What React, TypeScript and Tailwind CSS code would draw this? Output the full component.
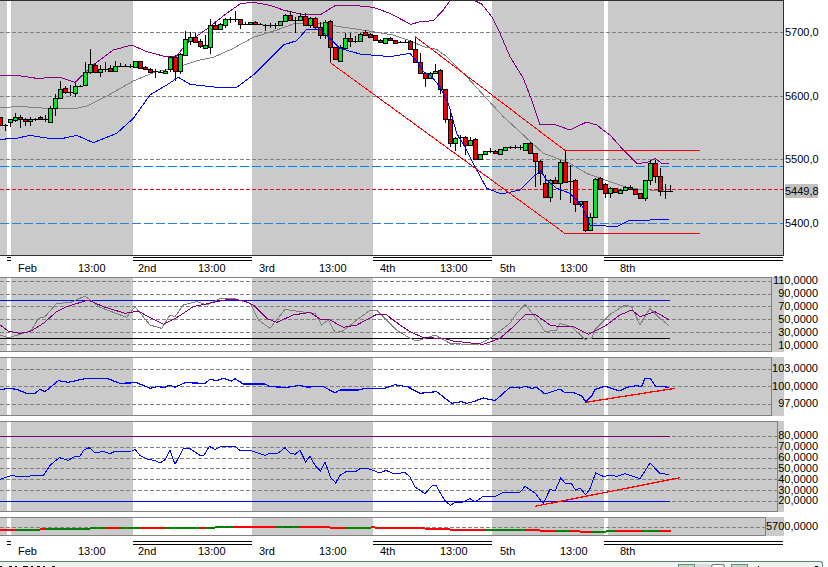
import type { ReactNode } from "react";

type Candle = [number, number, number, number, number];

// [top, bottom, high, low, kind] in 3x zoom units, one per bar, 5px apart. kind: 0 down, 1 up, 2 doji
const BARS: Candle[] = [
  [352, 375, 352, 378, 0], [375, 375, 372, 392, 2], [358, 365, 358, 380, 1], [352, 360, 340, 365, 1], [352, 358, 345, 384, 0],
  [358, 364, 355, 378, 0], [358, 364, 350, 378, 1], [358, 358, 355, 362, 2], [352, 358, 348, 360, 0], [358, 358, 345, 365, 2],
  [325, 365, 318, 365, 1], [295, 325, 282, 348, 1], [267, 295, 243, 298, 1], [265, 277, 258, 282, 0], [277, 277, 255, 288, 2],
  [258, 280, 250, 290, 1], [258, 258, 255, 260, 2], [216, 256, 185, 258, 1], [193, 215, 148, 222, 1], [196, 217, 190, 218, 0],
  [208, 217, 195, 232, 1], [208, 208, 185, 215, 2], [205, 212, 195, 215, 0], [198, 212, 183, 214, 1], [197, 197, 190, 200, 2],
  [197, 197, 193, 200, 2], [197, 197, 192, 205, 2], [184, 200, 182, 200, 1], [184, 203, 183, 204, 0], [200, 208, 197, 209, 0],
  [207, 215, 205, 216, 0], [213, 213, 208, 233, 2], [215, 215, 209, 220, 2], [212, 220, 208, 221, 1], [170, 208, 168, 215, 1],
  [170, 213, 165, 242, 0], [162, 212, 160, 222, 1], [118, 166, 93, 168, 1], [111, 122, 96, 134, 1], [111, 125, 100, 127, 0],
  [122, 139, 118, 143, 0], [135, 144, 105, 146, 1], [75, 140, 57, 162, 1], [75, 86, 62, 88, 0], [72, 86, 68, 88, 1],
  [57, 74, 55, 83, 1], [57, 57, 52, 70, 2], [57, 57, 33, 65, 2], [57, 73, 56, 88, 0], [71, 71, 66, 74, 2],
  [67, 73, 66, 75, 1], [65, 73, 62, 75, 0], [73, 73, 70, 76, 2], [76, 76, 72, 92, 2], [76, 76, 70, 85, 2],
  [74, 74, 68, 88, 2], [64, 74, 62, 76, 1], [46, 64, 43, 66, 1], [46, 60, 34, 62, 0], [61, 61, 50, 98, 2],
  [49, 61, 39, 63, 1], [49, 76, 40, 78, 0], [54, 76, 50, 84, 1], [54, 82, 52, 88, 0], [82, 104, 66, 117, 0],
  [67, 104, 60, 118, 1], [62, 142, 60, 188, 0], [142, 178, 140, 180, 0], [142, 182, 135, 184, 1], [115, 143, 98, 145, 1],
  [115, 123, 100, 142, 0], [124, 124, 108, 130, 2], [103, 124, 98, 126, 1], [95, 104, 90, 106, 0], [102, 110, 98, 112, 0],
  [106, 119, 104, 124, 0], [119, 127, 117, 128, 0], [115, 130, 114, 132, 1], [114, 120, 112, 122, 0], [121, 128, 119, 132, 0],
  [126, 126, 122, 128, 2], [126, 126, 120, 130, 2], [124, 146, 120, 148, 0], [146, 185, 110, 188, 0], [186, 220, 160, 222, 0],
  [220, 233, 218, 260, 0], [220, 235, 216, 237, 1], [212, 220, 192, 222, 1], [211, 268, 207, 282, 0], [268, 358, 266, 368, 0],
  [358, 430, 332, 440, 0], [415, 430, 410, 452, 1], [412, 412, 405, 440, 2], [412, 435, 408, 465, 0], [420, 436, 412, 438, 1],
  [418, 476, 415, 478, 0], [463, 476, 461, 478, 1], [454, 463, 452, 465, 1], [453, 453, 445, 458, 2], [454, 460, 450, 462, 0],
  [448, 462, 446, 464, 1], [442, 449, 440, 450, 1], [442, 442, 438, 446, 2], [442, 442, 436, 446, 2], [442, 442, 435, 449, 2],
  [430, 449, 428, 451, 1], [430, 460, 425, 462, 0], [460, 482, 458, 560, 0], [482, 520, 480, 555, 0], [550, 592, 525, 595, 0],
  [540, 592, 538, 607, 1], [540, 550, 530, 552, 0], [487, 550, 480, 600, 1], [487, 547, 452, 550, 0], [542, 542, 495, 610, 2],
  [540, 612, 538, 635, 0], [604, 612, 602, 622, 1], [604, 690, 602, 697, 0], [650, 690, 640, 692, 1], [538, 650, 535, 652, 1],
  [535, 568, 532, 570, 0], [553, 580, 550, 595, 0], [565, 578, 562, 595, 1], [565, 577, 563, 579, 0], [570, 578, 568, 583, 1],
  [560, 570, 558, 572, 1], [560, 568, 556, 570, 0], [568, 582, 566, 584, 0], [580, 595, 578, 597, 0], [541, 595, 539, 602, 1],
  [490, 541, 480, 555, 1], [490, 528, 480, 550, 0], [528, 572, 505, 588, 0], [572, 572, 553, 596, 2], [573, 573, 555, 575, 2],
];

// zoomed polylines: first list starts at x=0, second at x=410
const pts = (a: number[][], b: number[][], top: number) =>
  [
    ...a.map(([x, y]) => `${x / 3},${y / 3 + top}`),
    ...b.map(([x, y]) => `${x / 3 + 410},${y / 3 + top}`),
  ].join(" ");

const UPPER = pts(
  [[0, 226], [50, 226], [110, 235], [180, 232], [225, 247], [280, 195], [340, 150], [395, 135], [440, 155], [490, 168], [530, 168], [560, 130], [630, 80], [680, 40], [720, 12], [755, 6], [810, 16], [850, 30], [900, 42], [960, 45], [1005, 17], [1060, 16], [1120, 22], [1170, 40], [1230, 72]],
  [[0, 74], [30, 65], [70, 62], [100, 30], [120, 2], [190, 0], [215, 12], [245, 50], [270, 100], [300, 170], [340, 235], [365, 300], [390, 375], [430, 372], [480, 390], [530, 366], [560, 375], [600, 405], [640, 450], [680, 490], [710, 488], [735, 475], [755, 490], [778, 492]],
  0,
);
const MIDDLE = pts(
  [[0, 322], [70, 320], [140, 325], [220, 327], [260, 318], [330, 283], [400, 243], [460, 218], [530, 203], [590, 182], [640, 172], [700, 145], [760, 112], [830, 90], [880, 72], [960, 70], [1020, 80], [1100, 92], [1180, 105]],
  [[0, 122], [40, 140], [80, 148], [110, 170], [170, 230], [220, 285], [280, 350], [340, 405], [400, 460], [470, 485], [530, 520], [600, 545], [660, 565], [720, 570], [778, 575]],
  0,
);
const LOWER = pts(
  [[0, 418], [50, 415], [90, 406], [140, 414], [180, 417], [230, 406], [280, 428], [350, 400], [400, 355], [450, 285], [500, 255], [535, 232], [570, 253], [650, 262], [710, 262], [760, 225], [810, 175], [850, 135], [890, 122], [920, 88], [960, 88], [990, 115], [1020, 145], [1080, 162], [1170, 170]],
  [[0, 160], [25, 190], [40, 215], [60, 225], [90, 260], [115, 310], [140, 400], [170, 450], [195, 500], [230, 565], [275, 582], [330, 570], [370, 530], [392, 513], [410, 540], [440, 565], [480, 580], [515, 615], [540, 675], [620, 680], [660, 660], [720, 660], [778, 658]],
  0,
);

const RSI_SLOW = pts(
  [[0, 165], [25, 183], [60, 190], [90, 185], [130, 160], [170, 125], [200, 110], [265, 90], [310, 110], [375, 130], [415, 123], [450, 143], [490, 163], [530, 143], [580, 110], [640, 97], [690, 87], [730, 92], [760, 105], [800, 145], [830, 157], [880, 135], [930, 127], [960, 147], [985, 147], [1030, 172], [1070, 165], [1130, 133], [1160, 135], [1200, 165]],
  [[0, 185], [40, 203], [100, 205], [130, 213], [220, 223], [270, 205], [310, 170], [345, 135], [375, 133], [420, 165], [450, 170], [490, 170], [535, 193], [590, 165], [630, 135], [665, 120], [690, 140], [735, 125], [778, 150]],
  270,
);
const RSI_FAST = pts(
  [[0, 195], [25, 203], [70, 190], [95, 180], [115, 145], [135, 140], [170, 100], [210, 98], [255, 78], [300, 112], [380, 142], [405, 110], [450, 165], [485, 175], [510, 135], [525, 140], [550, 105], [590, 95], [620, 105], [660, 85], [700, 85], [750, 100], [775, 150], [810, 175], [855, 118], [900, 125], [945, 130], [965, 165], [985, 150], [1005, 187], [1025, 185], [1110, 120], [1130, 120], [1190, 180]],
  [[0, 205], [20, 213], [75, 195], [120, 220], [200, 225], [240, 205], [300, 160], [320, 130], [345, 103], [375, 140], [405, 185], [440, 180], [450, 160], [485, 170], [525, 208], [545, 205], [555, 178], [600, 133], [645, 105], [665, 110], [690, 165], [720, 115], [750, 145], [778, 168]],
  270,
);
const MOMENTUM = pts(
  [[0, 360], [25, 355], [50, 358], [80, 370], [105, 370], [120, 358], [135, 365], [175, 332], [205, 337], [260, 325], [320, 325], [360, 340], [410, 338], [450, 355], [470, 350], [495, 352], [510, 345], [525, 352], [555, 338], [615, 340], [630, 328], [650, 332], [670, 325], [695, 333], [705, 326], [730, 342], [795, 342], [810, 350], [860, 352], [900, 346], [920, 351], [970, 350], [1005, 368], [1020, 360], [1075, 360], [1095, 355], [1150, 356], [1185, 344], [1230, 352]],
  [[0, 355], [30, 370], [80, 365], [125, 400], [155, 395], [170, 400], [190, 395], [220, 384], [255, 392], [300, 352], [330, 354], [345, 349], [365, 355], [380, 352], [405, 372], [450, 357], [465, 368], [490, 368], [515, 377], [527, 395], [545, 378], [555, 358], [585, 349], [630, 363], [650, 352], [680, 347], [695, 350], [705, 325], [720, 325], [738, 350], [760, 350], [778, 352]],
  270,
);
const STOCH = pts(
  [[0, 187], [35, 175], [50, 178], [130, 176], [150, 145], [178, 122], [205, 130], [225, 118], [240, 118], [250, 100], [268, 92], [285, 108], [310, 103], [330, 110], [345, 103], [395, 102], [405, 97], [420, 115], [445, 128], [465, 130], [480, 138], [495, 128], [510, 100], [525, 142], [550, 95], [570, 95], [600, 115], [612, 115], [628, 88], [645, 97], [665, 88], [705, 88], [720, 100], [750, 100], [795, 115], [810, 108], [835, 108], [855, 92], [870, 108], [885, 112], [900, 100], [917, 135], [930, 118], [945, 145], [962, 162], [975, 135], [992, 182], [1007, 198], [1020, 175], [1040, 163], [1065, 165], [1080, 155], [1105, 155], [1140, 168], [1158, 160], [1180, 170], [1215, 167]],
  [[0, 180], [15, 210], [45, 230], [65, 207], [78, 205], [95, 235], [108, 255], [122, 265], [135, 255], [160, 255], [180, 245], [195, 255], [220, 238], [255, 238], [280, 226], [330, 226], [345, 208], [375, 228], [400, 260], [420, 217], [435, 222], [452, 183], [467, 200], [483, 198], [497, 220], [510, 213], [527, 233], [540, 215], [557, 168], [580, 178], [605, 175], [620, 178], [645, 170], [690, 185], [720, 138], [750, 170], [778, 172]],
  417,
);

// [x1, x2, y, colour] for the thin strip, in zoom units
const G = "#008000";
const R = "#ff0000";
const STRIP: [number, number, number, string][] = [
  [0, 45, 338, R], [45, 120, 338, G], [120, 135, 336, R], [135, 270, 335, G], [270, 315, 332, G], [315, 360, 332, R],
  [360, 420, 332, G], [420, 495, 332, R], [495, 600, 332, G], [600, 615, 332, R], [615, 645, 332, G], [645, 700, 329, G],
  [700, 828, 329, R], [828, 900, 329, G], [900, 990, 329, R], [990, 1035, 332, R], [1035, 1113, 332, G], [1113, 1125, 329, R],
  [1125, 1230, 332, R], [1230, 1275, 332, R], [1275, 1350, 335, R], [1350, 1458, 338, R], [1458, 1575, 338, G],
  [1575, 1620, 338, R], [1620, 1668, 341, R], [1668, 1710, 341, G], [1710, 1740, 341, R], [1740, 1775, 344, R],
  [1775, 1818, 344, G], [1818, 1845, 341, G], [1845, 1923, 341, R], [1923, 1980, 341, G], [1980, 2013, 341, R],
];

const BANDS = [
  ["w-[7px]", true], ["w-[4px]", false], ["w-[122px]", true], ["w-[119px]", false], ["w-[121px]", true],
  ["w-[119px]", false], ["w-[112px]", true], ["w-[4px]", false], ["w-[175px]", true],
] as const;

const DATES = [
  { date: "Feb", w: "w-[133px]", cell: "w-[78px] pl-[18px]", rule: "ml-[7px] w-[4px] border-black" },
  { date: "2nd", w: "w-[119px]", cell: "w-[65px] pl-[5px]", rule: "border-black" },
  { date: "3rd", w: "w-[121px]", cell: "w-[67px] pl-[7px]", rule: "border-transparent" },
  { date: "4th", w: "w-[119px]", cell: "w-[67px] pl-[7px]", rule: "border-black" },
  { date: "5th", w: "w-[112px]", cell: "w-[68px] pl-[8px]", rule: "border-transparent" },
  { date: "8th", w: "w-[179px]", cell: "w-[68px] pl-[16px]", rule: "border-black" },
];

function Bands() {
  return (
    <div className="absolute inset-0 flex w-[783px]">
      {BANDS.map(([w, dark], i) => (
        <div key={i} className={`${w} shrink-0 h-full ${dark ? "bg-[#cacaca]" : "bg-white"}`} />
      ))}
    </div>
  );
}

function Dash({ y, w = 783 }: { y: number; w?: number }) {
  return <line x1="0" x2={w} y1={y} y2={y} stroke="#808080" strokeDasharray="4 2" />;
}

function Plot({ h, w, top, children }: { h: number; w: number; top: number; children: ReactNode }) {
  return (
    <div
      className="relative overflow-hidden border-t border-b border-r border-[#808080] box-content bg-white shrink-0"
      style={{ height: h, width: w }}
    >
      <Bands />
      <svg className="absolute left-0 top-0" width="783" height={h} viewBox={`0 ${top} 783 ${h}`} fill="none" shapeRendering="crispEdges">
        {children}
      </svg>
    </div>
  );
}

function Panel({ plot, gray, labels, children }: { plot: ReactNode; gray: string; labels: string; children: ReactNode }) {
  return (
    <div className="relative flex shrink-0">
      {plot}
      <div className={`${gray} bg-[#cacaca] shrink-0`} />
      <div className={`absolute right-[10px] flex flex-col items-end text-[11px] ${labels}`}>{children}</div>
    </div>
  );
}

function Candles() {
  return (
    <g shapeRendering="crispEdges">
      {BARS.map(([t, b, hi, lo, kind], i) => {
        const x = Math.round(0.3 + 5 * i);
        const top = Math.round(t / 3);
        const bot = Math.round(b / 3);
        return (
          <g key={i}>
            <line x1={x + 0.5} x2={x + 0.5} y1={Math.round(hi / 3)} y2={Math.round(lo / 3)} stroke="#000" />
            {kind === 2 ? (
              <line x1={x - 2} x2={x + 3} y1={top + 0.5} y2={top + 0.5} stroke="#000" />
            ) : (
              <rect x={x - 1.5} y={top + 0.5} width="4" height={Math.max(bot - top, 1)} fill={kind === 1 ? "#00e628" : "#ee0000"} stroke="#000" />
            )}
          </g>
        );
      })}
    </g>
  );
}

function TimeAxis({ pad, gap }: { pad: string; gap: string }) {
  return (
    <div className={`${pad} flex shrink-0 w-[783px]`}>
      {DATES.map(({ date, w, cell, rule }) => (
        <div key={date} className={`${w} shrink-0 flex flex-col`}>
          <div className={`h-[4px] border-y ${rule}`} />
          <div className={`${gap} flex text-[11px] leading-[13px]`}>
            <span className={cell}>{date}</span>
            {date !== "8th" && <span>13:00</span>}
          </div>
        </div>
      ))}
    </div>
  );
}

export default function App() {
  return (
    <div className="relative w-[828px] h-[567px] bg-white overflow-hidden flex flex-col text-black font-['Liberation_Sans',Arial,sans-serif]">
      {/* price chart */}
      <div className="flex shrink-0">
        <div className="relative w-[784px] h-[256px] border-t border-b border-r border-[#303030] overflow-hidden shrink-0">
          <Bands />
          <svg className="absolute left-0 -top-px" width="783" height="256" fill="none" shapeRendering="crispEdges">
            <Dash y={32.5} />
            <Dash y={96.5} />
            <Dash y={159.5} />
            <line x1="0" x2="783" y1="189.5" y2="189.5" stroke="#e01020" strokeDasharray="4 2" />
            <line x1="0" x2="783" y1="166.5" y2="166.5" stroke="#0080ff" strokeDasharray="9 3" />
            <line x1="0" x2="783" y1="223.5" y2="223.5" stroke="#3080d0" strokeDasharray="9 3" />
            <polyline points={UPPER} stroke="#800080" />
            <polyline points={MIDDLE} stroke="#808080" />
            <Candles />
            <polyline points={LOWER} stroke="#0000ff" />
            <polyline points="330,62.5 565,233.5 700,233.5" stroke="#ff0000" />
            <polyline points="415,36.5 565,150.5 700,150.5" stroke="#ff0000" />
          </svg>
        </div>
        <div className="ml-px w-[33px] flex flex-col text-[11px] leading-[14px] text-center">
          <span className="mt-[25px]">5700,0</span>
          <span className="mt-[50px]">5600,0</span>
          <span className="mt-[49px]">5500,0</span>
          <span className="mt-[18px] bg-[#c0c0c0]">5449,8</span>
          <span className="mt-[18px]">5400,0</span>
        </div>
      </div>

      <TimeAxis pad="h-[21px] pt-px" gap="mt-px" />

      {/* RSI */}
      <Panel
        gray="w-[12px]"
        labels="-top-[3px] h-[76px] justify-between leading-[13px]"
        plot={
          <Plot h={73} w={771} top={278}>
            <Dash y={281.5} />
            <Dash y={294.5} />
            <Dash y={306.5} />
            <Dash y={319.5} />
            <Dash y={332.5} />
            <Dash y={344.5} />
            <line x1="0" x2="670" y1="300.5" y2="300.5" stroke="#0000ff" />
            <line x1="0" x2="670" y1="338.5" y2="338.5" stroke="#000" />
            <polyline points={RSI_FAST} stroke="#808080" />
            <polyline points={RSI_SLOW} stroke="#800080" />
          </Plot>
        }
      >
        <span>110,0000</span>
        <span>90,0000</span>
        <span>70,0000</span>
        <span>50,0000</span>
        <span>30,0000</span>
        <span>10,0000</span>
      </Panel>

      {/* momentum */}
      <div className="mt-[5px] shrink-0">
        <Panel
          gray="w-[12px]"
          labels="top-[5px] h-[48px] justify-between leading-[13px]"
          plot={
            <Plot h={57} w={771} top={358}>
              <Dash y={369.5} />
              <Dash y={386.5} />
              <Dash y={404.5} />
              <polyline points={MOMENTUM} stroke="#0000ff" strokeWidth="1.2" />
              <line x1="585.7" y1="402.3" x2="675" y2="388.3" stroke="#ff0000" strokeWidth="1.3" />
            </Plot>
          }
        >
          <span>103,0000</span>
          <span>100,0000</span>
          <span>97,0000</span>
        </Panel>
      </div>

      {/* stochastic */}
      <div className="mt-[5px] shrink-0">
        <Panel
          gray="w-[6px]"
          labels="top-[9px] leading-[10.9px]"
          plot={
            <Plot h={89} w={777} top={422}>
              <Dash y={436.5} />
              <Dash y={447.5} />
              <Dash y={458.5} />
              <Dash y={468.5} />
              <Dash y={479.5} />
              <Dash y={490.5} />
              <Dash y={501.5} />
              <line x1="0" x2="670" y1="436.5" y2="436.5" stroke="#700070" />
              <line x1="0" x2="670" y1="501.5" y2="501.5" stroke="#0000ff" />
              <polyline points={STOCH} stroke="#0000ff" />
              <line x1="535" y1="506.3" x2="680" y2="477.7" stroke="#ff0000" strokeWidth="1.3" />
            </Plot>
          }
        >
          <span>80,0000</span>
          <span>70,0000</span>
          <span>60,0000</span>
          <span>50,0000</span>
          <span>40,0000</span>
          <span>30,0000</span>
          <span>20,0000</span>
        </Panel>
      </div>

      {/* volume strip */}
      <div className="mt-[5px] shrink-0">
        <Panel
          gray="w-[18px]"
          labels="top-[3px] leading-[13px]"
          plot={
            <Plot h={17} w={765} top={518}>
              <Dash y={527.5} />
              {STRIP.map(([a, b, y, c], i) => (
                <line key={i} x1={a / 3} x2={b / 3} y1={y / 3 + 417} y2={y / 3 + 417} stroke={c} strokeWidth="2" />
              ))}
            </Plot>
          }
        >
          <span>5700,0000</span>
        </Panel>
      </div>

      <TimeAxis pad="h-[25px] pt-[5px]" gap="mt-0" />

      {/* status bar, only its top edge is in frame */}
      <div className="h-[6px] w-[823px] shrink-0 flex items-end border-t border-r rounded-tr-[3px] border-[#5f7f70] bg-[#eef5f0]">
        <svg width="55" height="1" className="shrink-0" shapeRendering="crispEdges">
          <path d="M0 .5h2M9 .5h3M15 .5h2M23 .5h5M31 .5h2M37 .5h3M43 .5h2M52 .5h3" stroke="#000" />
        </svg>
        <div className="ml-[623px] w-[17px] h-[3px] shrink-0 border-t border-x border-[#5f8f7f] bg-[#c4d8c4]" />
        <div className="w-[16px] h-[3px] shrink-0 bg-[#dcdcdc]" />
        <div className="w-[14px] h-[3px] shrink-0 border-t border-x rounded-t-sm border-[#5f7f70] bg-white" />
        <div className="ml-[6px] w-[17px] h-[3px] shrink-0 border-t border-x border-[#5f8f7f] bg-[#c4d8c4]" />
        <div className="ml-[10px] w-px h-px shrink-0 bg-black" />
        <div className="ml-[56px] w-[3px] h-px shrink-0 bg-black" />
      </div>
    </div>
  );
}
